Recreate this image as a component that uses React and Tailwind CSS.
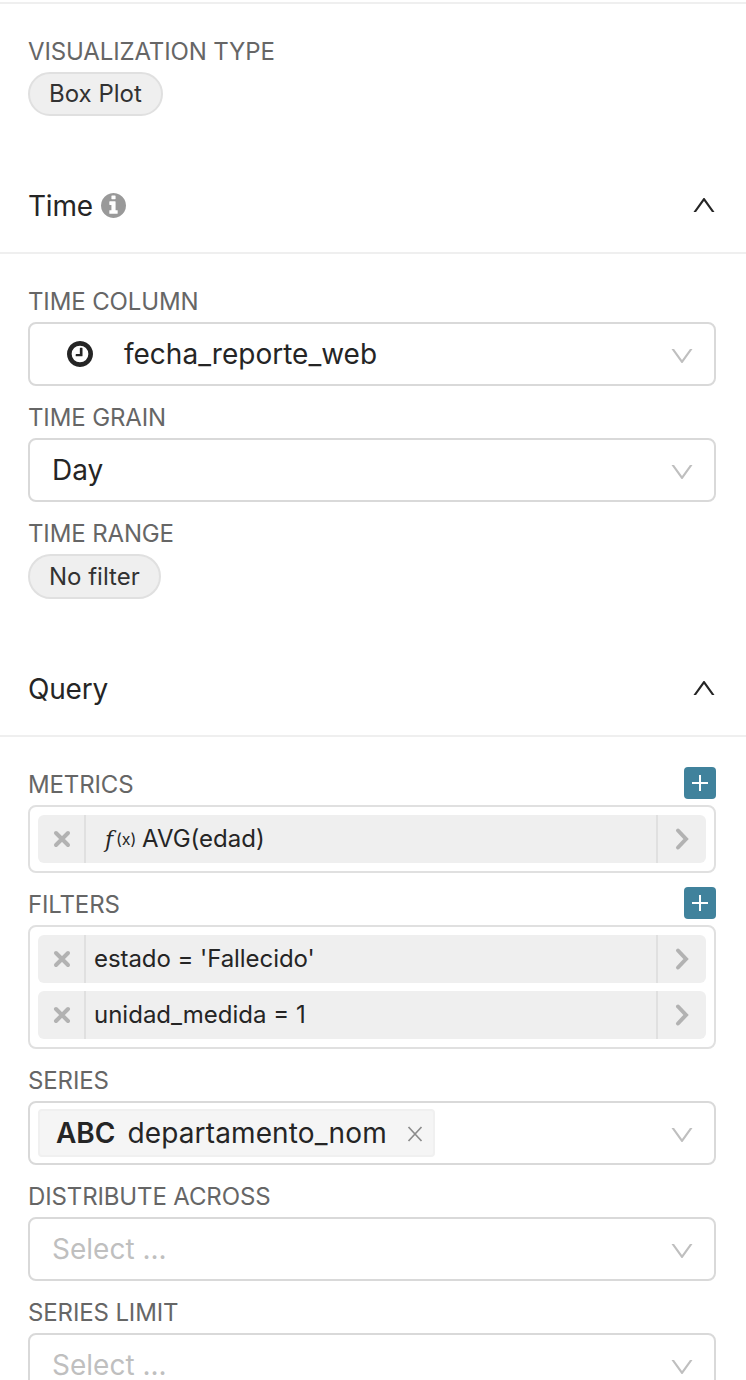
import React from "react";
import { AiOutlineDown, AiOutlineUp } from "react-icons/ai";

const DISC =
  "M1536 896q0 209-103 385.5t-279.5 279.5-385.5 103-385.5-103-279.5-279.5-103-385.5 103-385.5 279.5-279.5 385.5-103 385.5 103 279.5 279.5 103 385.5z";

function ClockIcon() {
  return (
    <svg className="size-[26px] shrink-0" viewBox="0 128 1536 1536" fill="currentColor" fillRule="evenodd">
      <path d={DISC + "M1262 896a494 494 0 1 0-988 0a494 494 0 1 0 988 0z"} />
      <path d="M916 564v438q0 14-9 23t-23 9h-340q-14 0-23-9t-9-23v-74q0-14 9-23t23-9h214v-332q0-14 9-23t23-9h94q14 0 23 9t9 23z" />
    </svg>
  );
}

function InfoIcon() {
  return (
    <svg className="mb-px ml-2 size-[25px] text-[#999999]" viewBox="0 128 1536 1536" fill="currentColor" fillRule="evenodd">
      <path
        d={
          DISC +
          "M1024 1376v-160q0-14-9-23t-23-9h-96v-512q0-14-9-23t-23-9h-320q-14 0-23 9t-9 23v160q0 14 9 23t23 9h96v320h-96q-14 0-23 9t-9 23v160q0 14 9 23t23 9h448q14 0 23-9t9-23z" +
          "M896 480v-160q0-14-9-23t-23-9h-192q-14 0-23 9t-9 23v160q0 14 9 23t23 9h192q14 0 23-9t9-23z"
        }
      />
    </svg>
  );
}

function Section({ title, info }) {
  return (
    <div className="flex h-24 items-center justify-between border-b-2 border-[#efefef] pr-7 pl-7 pt-[2px]">
      <div className="flex items-center text-[28px] leading-8 tracking-[-0.2px]">
        {title}
        {info && <InfoIcon />}
      </div>
      <AiOutlineUp className="mb-[2px] size-7" />
    </div>
  );
}

function Label({ children, add }) {
  return (
    <div className="flex h-[52px] items-start justify-between pt-[14px]">
      <div className="pt-[2px] text-2xl leading-8 tracking-[-0.13px] text-[#666666]">{children}</div>
      {add && (
        <button className="flex size-8 items-center justify-center rounded-[4px] bg-[#40829c]">
          <svg className="size-4" viewBox="0 0 16 16" stroke="white" strokeWidth="2">
            <path d="M8 0V16M0 8H16" />
          </svg>
        </button>
      )}
    </div>
  );
}

function Pill({ children }) {
  return (
    <div className="flex h-full w-fit items-center rounded-full border-2 border-[#e0e0e0] bg-[#efefef] px-[19px] text-2xl text-[#323232]">
      {children}
    </div>
  );
}

function Select({ children, tagged }) {
  return (
    <div
      className={
        "flex h-16 items-center justify-between rounded-lg border-2 border-[#d9d9d9] pr-[18px] text-[28px] " +
        (tagged ? "pl-2" : "pl-[22px]")
      }
    >
      <div className="flex items-center">{children}</div>
      <AiOutlineDown className="mt-1 size-7 text-[#bfbfbf]" />
    </div>
  );
}

function OptionList({ children }) {
  return <div className="flex flex-col gap-2 rounded-lg border-2 border-[#e0e0e0] p-2">{children}</div>;
}

function Option({ children }) {
  return (
    <div className="flex h-12 items-stretch rounded-[6px] bg-[#efefef] text-2xl">
      <div className="flex w-12 items-center justify-center border-r-2 border-[#e0e0e0]">
        <svg className="ml-[2px] size-5 text-[#b2b2b2]" viewBox="0 0 20 20" fill="none" stroke="currentColor" strokeWidth="4" strokeLinecap="round">
          <path d="M4 4L16 16M16 4L4 16" />
        </svg>
      </div>
      <div className="flex flex-1 items-center pl-2">{children}</div>
      <div className="flex w-[50px] items-center justify-center border-l-2 border-[#e0e0e0]">
        <svg className="size-6 text-[#b2b2b2]" viewBox="0 0 24 24" fill="none" stroke="currentColor" strokeWidth="4" strokeLinecap="round">
          <path d="M8 3.5L16 12L8 20.5" />
        </svg>
      </div>
    </div>
  );
}

export default function App() {
  return (
    <div className="h-[1380px] overflow-hidden bg-white pt-[2px] font-['Inter',sans-serif] text-[#252525]">
      <div className="h-[2px] bg-[#efefef]" />
      <div className="pr-[30px] pl-7 pt-4">
        <Label>VISUALIZATION TYPE</Label>
        <div className="h-11">
          <Pill>Box Plot</Pill>
        </div>
      </div>
      <div className="pt-[42px]">
        <Section title="Time" info />
      </div>
      <div className="pr-[30px] pl-7 pt-4">
        <Label>TIME COLUMN</Label>
        <Select>
          <div className="flex w-[72px] pl-[15px]">
            <ClockIcon />
          </div>
          fecha_reporte_web
        </Select>
        <Label>TIME GRAIN</Label>
        <Select>Day</Select>
        <Label>TIME RANGE</Label>
        <div className="h-[45px]">
          <Pill>No filter</Pill>
        </div>
      </div>
      <div className="pt-[42px]">
        <Section title="Query" />
      </div>
      <div className="pr-[30px] pl-7 pt-4">
        <Label add>METRICS</Label>
        <OptionList>
          <Option>
            <span className="flex w-12 items-center pl-[11px] text-base">
              <span className="mr-px w-[10px] font-['DejaVu_Serif',serif] text-[22px] italic">f</span>
              <span>(x)</span>
            </span>
            AVG(edad)
          </Option>
        </OptionList>
        <Label add>FILTERS</Label>
        <OptionList>
          <Option>
            <span className="tracking-[-0.06px]">estado = 'Fallecido'</span>
          </Option>
          <Option>unidad_medida = 1</Option>
        </OptionList>
        <Label>SERIES</Label>
        <Select tagged>
          <div className="flex h-12 w-[397px] items-center rounded-[4px] border-2 border-[#f0f0f0] bg-[#f5f5f5] pl-4">
            <b className="mr-3 font-semibold">ABC</b>
            <span className="tracking-[0.13px]">departamento_nom</span>
            <svg className="mt-px mr-[10px] ml-auto size-4 text-[#8c8c8c]" viewBox="0 0 16 16" stroke="currentColor" strokeWidth="1.7">
              <path d="M1.5 1L14.5 15M14.5 1L1.5 15" />
            </svg>
          </div>
        </Select>
        <Label>DISTRIBUTE ACROSS</Label>
        <Select>
          <span className="text-[#bfbfbf]">Select ...</span>
        </Select>
        <Label>SERIES LIMIT</Label>
        <Select>
          <span className="text-[#bfbfbf]">Select ...</span>
        </Select>
      </div>
    </div>
  );
}
